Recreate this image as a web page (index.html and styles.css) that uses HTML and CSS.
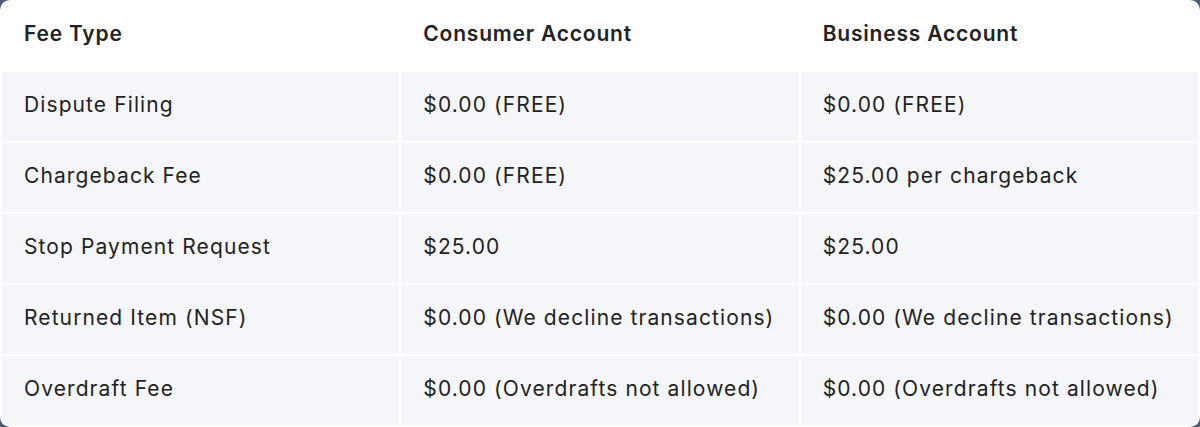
FILE: index.html
```html
<!DOCTYPE html>
<html lang="en">
<head>
<meta charset="utf-8">
<title>Fee Schedule</title>
<link rel="stylesheet" href="styles.css">
</head>
<body>
<div class="card">
  <table class="fees">
    <thead>
      <tr>
        <th>Fee Type</th>
        <th>Consumer Account</th>
        <th>Business Account</th>
      </tr>
    </thead>
    <tbody>
      <tr>
        <td>Dispute Filing</td>
        <td>$0.00 (FREE)</td>
        <td>$0.00 (FREE)</td>
      </tr>
      <tr>
        <td>Chargeback Fee</td>
        <td>$0.00 (FREE)</td>
        <td>$25.00 per chargeback</td>
      </tr>
      <tr>
        <td>Stop Payment Request</td>
        <td>$25.00</td>
        <td>$25.00</td>
      </tr>
      <tr>
        <td>Returned Item (NSF)</td>
        <td>$0.00 (We decline transactions)</td>
        <td>$0.00 (We decline transactions)</td>
      </tr>
      <tr>
        <td>Overdraft Fee</td>
        <td>$0.00 (Overdrafts not allowed)</td>
        <td>$0.00 (Overdrafts not allowed)</td>
      </tr>
    </tbody>
  </table>
</div>
</body>
</html>
```

FILE: styles.css
```css
html, body {
  margin: 0;
  padding: 0;
  background: #4c5b77;
}

.card {
  width: 1200px;
  height: 427px;
  background: #ffffff;
  border-radius: 10px;
  overflow: hidden;
}

.fees {
  width: 100%;
  table-layout: fixed;
  border-collapse: separate;
  border-spacing: 2px;
  font-family: "Inter", "Liberation Sans", sans-serif;
  font-size: 21px;
  letter-spacing: 1.1px;
  color: #222222;
}

.fees th,
.fees td {
  text-align: left;
  padding: 0 0 4px 22px;
  line-height: 24px;
  white-space: nowrap;
}

.fees th {
  height: 64px;
  font-weight: 600;
  letter-spacing: 0.8px;
  background: #ffffff;
}

.fees td {
  height: 65px;
  font-weight: 400;
  background: #f5f6fa;
}
```
